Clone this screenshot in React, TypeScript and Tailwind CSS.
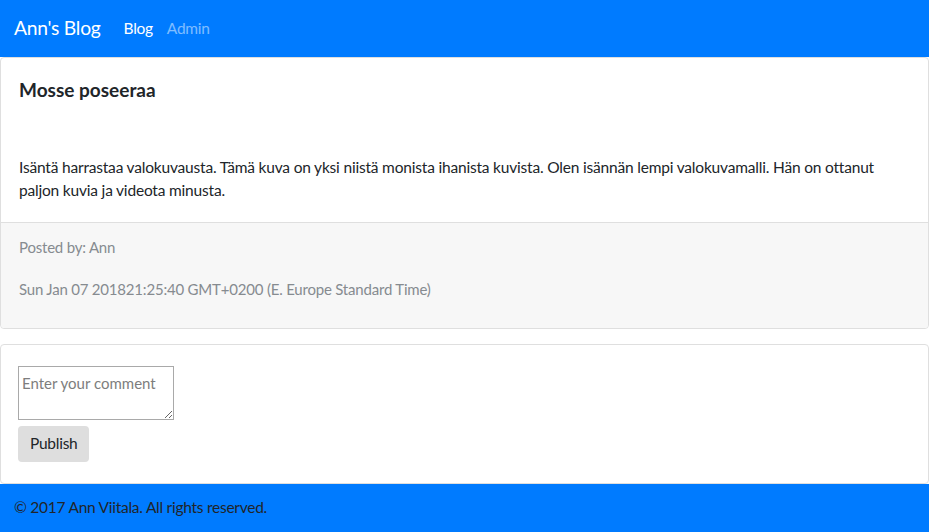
import React from 'react'

const font = { fontFamily: 'Lato, "Open Sans", sans-serif' }

function Navbar() {
  return (
    <nav className="flex h-[57px] items-center bg-[#007bff] px-[14px] tracking-[-0.26px]">
      <a className="mr-[23px] text-[19.3px] text-white">Ann's Blog</a>
      <a className="mr-[14px] text-[15.5px] text-white">Blog</a>
      <a className="text-[15.5px] text-white/50">Admin</a>
    </nav>
  )
}

function PostCard() {
  return (
    <div className="rounded-[4px] border border-[#dfdfdf] bg-white">
      <div className="px-[18px] pt-[20px] pb-[20px]">
        <h5 className="mb-[53px] text-[19px] leading-[24px] font-bold text-[#212529]">
          Mosse poseeraa
        </h5>
        <p className="pt-[1px] text-[15.5px] leading-[23px] tracking-[-0.19px] text-[#212529]">
          Isäntä harrastaa valokuvausta. Tämä kuva on yksi niistä monista ihanista kuvista. Olen
          isännän lempi valokuvamalli. Hän on ottanut paljon kuvia ja videota minusta.
        </p>
      </div>
      <div className="rounded-b-[4px] border-t border-[#dfdfdf] bg-[#f7f7f7] px-[18px] pt-[12px] pb-[27px] text-[15px] leading-[24px] tracking-[-0.2px] text-[#868b90]">
        <p className="mb-[18px]">Posted by: Ann</p>
        <p>Sun Jan 07 201821:25:40 GMT+0200 (E. Europe Standard Time)</p>
      </div>
    </div>
  )
}

function CommentCard() {
  return (
    <div className="mt-[15px] rounded-[4px] border border-[#dfdfdf] bg-white px-[17px] pt-[21px] pb-[21px]">
      <textarea
        placeholder="Enter your comment"
        className="block h-[54px] w-[156px] border border-[#a9a9a9] px-[3px] pt-[6px] text-[15px] leading-[20px] text-[#212529] placeholder:text-[#7d7d7d]"
        style={font}
      />
      <button
        className="mt-[6px] block h-[36px] rounded-[4px] bg-[#dedede] px-[12px] text-[15.5px] tracking-[-0.26px] text-[#212529]"
        style={font}
      >
        Publish
      </button>
    </div>
  )
}

export default function App() {
  return (
    <div className="min-h-[532px] bg-white" style={font}>
      <Navbar />
      <PostCard />
      <CommentCard />
      <footer className="flex h-[48px] items-center bg-[#007bff] px-[14px] text-[15.5px] tracking-[-0.26px] text-[#212529]">
        © 2017 Ann Viitala. All rights reserved.
      </footer>
    </div>
  )
}
